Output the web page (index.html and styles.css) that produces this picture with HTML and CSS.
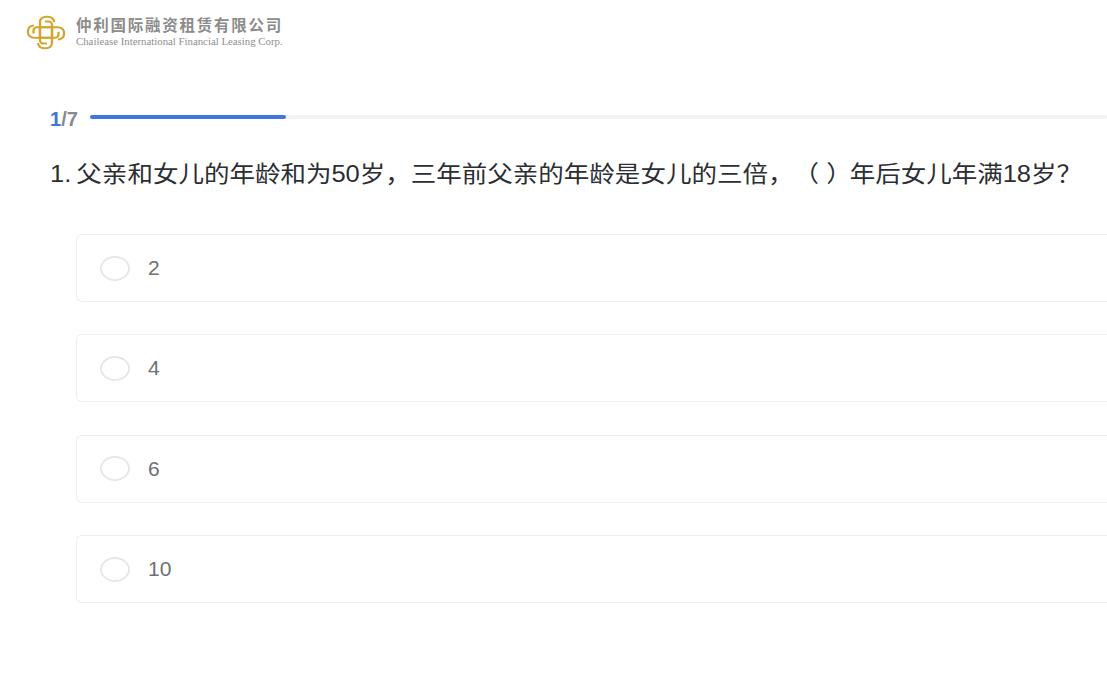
FILE: index.html
```html
<!DOCTYPE html>
<html lang="zh">
<head>
<meta charset="utf-8">
<title>仲利国际融资租赁有限公司</title>
<link rel="stylesheet" href="styles.css">
</head>
<body>
<header class="brand">
  <svg class="logo" viewBox="0 0 40 40" width="40" height="35" preserveAspectRatio="none" fill="none" stroke="#d2a62c" stroke-width="2.300">
    <defs>
      <path id="arm" d="M14 26V8a6 6 0 0 1 6-6h2a6 6 0 0 1 6 6M26 14v-3a3.500 3.500 0 0 0-3.500-3.500H19"/>
    </defs>
    <rect x="14" y="14" width="12" height="12"/>
    <use href="#arm"/>
    <use href="#arm" transform="rotate(90 20 20)"/>
    <use href="#arm" transform="rotate(180 20 20)"/>
    <use href="#arm" transform="rotate(270 20 20)"/>
  </svg>
  <div class="brand-text">
    <div class="brand-cn">仲利国际融资租赁有限公司</div>
    <div class="brand-en">Chailease International Financial Leasing Corp.</div>
  </div>
</header>
<main class="quiz">
  <div class="progress">
    <div class="count"><span class="current">1</span>/7</div>
    <div class="track"><div class="fill" style="width:196px"></div></div>
  </div>
  <h1 class="question">1. 父亲和女儿的年龄和为50岁，三年前父亲的年龄是女儿的三倍， <span class="blank">（ ）</span>年后女儿年满18岁？</h1>
  <div class="options">
    <div class="option"><span class="radio"></span><span class="label">2</span></div>
    <div class="option"><span class="radio"></span><span class="label">4</span></div>
    <div class="option"><span class="radio"></span><span class="label">6</span></div>
    <div class="option"><span class="radio"></span><span class="label">10</span></div>
  </div>
</main>
</body>
</html>
```
FILE: styles.css
```css
* { box-sizing: border-box; }
html, body { margin: 0; height: 100%; overflow: hidden; background: #fff; }
body { font-family: "Liberation Sans", "Noto Sans CJK SC", sans-serif; width: 1107px; }
.brand { display: flex; align-items: center; gap: 10px; padding: 15px 0 0 26px; height: 50px; }
.logo { flex: none; }
.brand-text { display: flex; flex-direction: column; margin-top: -3px; }
.brand-cn { font-size: 15.500px; line-height: 20px; font-weight: 700; color: #8c8c8c; letter-spacing: 1.750px; white-space: nowrap; }
.brand-en { font-family: "Liberation Serif", serif; font-size: 10.800px; line-height: 10px; color: #8f8f8f; white-space: nowrap; }
.quiz { padding: 57px 0 0 50px; }
.progress { display: flex; align-items: flex-start; gap: 12px; height: 26px; }
.count { font-size: 20px; line-height: 24px; font-weight: 700; color: #86898e; width: 28px; }
.current { color: #3e74dd; }
.track { flex: 1; height: 4px; margin-top: 8px; background: #f2f3f4; border-radius: 2px; }
.fill { height: 100%; background: #3f76e4; border-radius: 2px; }
.question { width: 920px; margin: 25px 0 0; font-size: 23px; line-height: 32px; font-weight: 400; color: #2b2e33; white-space: nowrap; word-spacing: -1.800px; transform: scaleX(1.109); transform-origin: 0 0; }
.blank { margin: 0 -1.800px 0 -4.500px; word-spacing: 0; }
.options { display: flex; flex-direction: column; gap: 32.400px; margin: 44px 0 0 26px; }
.option { display: flex; align-items: center; gap: 18px; height: 68px; padding-left: 23px; border: 1px solid #eceef0; border-right: 0; border-radius: 6px 0 0 6px; }
.radio { width: 30px; height: 25px; border: 2px solid #e6e7e9; border-radius: 50%; }
.label { font-size: 21px; line-height: 24px; color: #6d7075; }
```
